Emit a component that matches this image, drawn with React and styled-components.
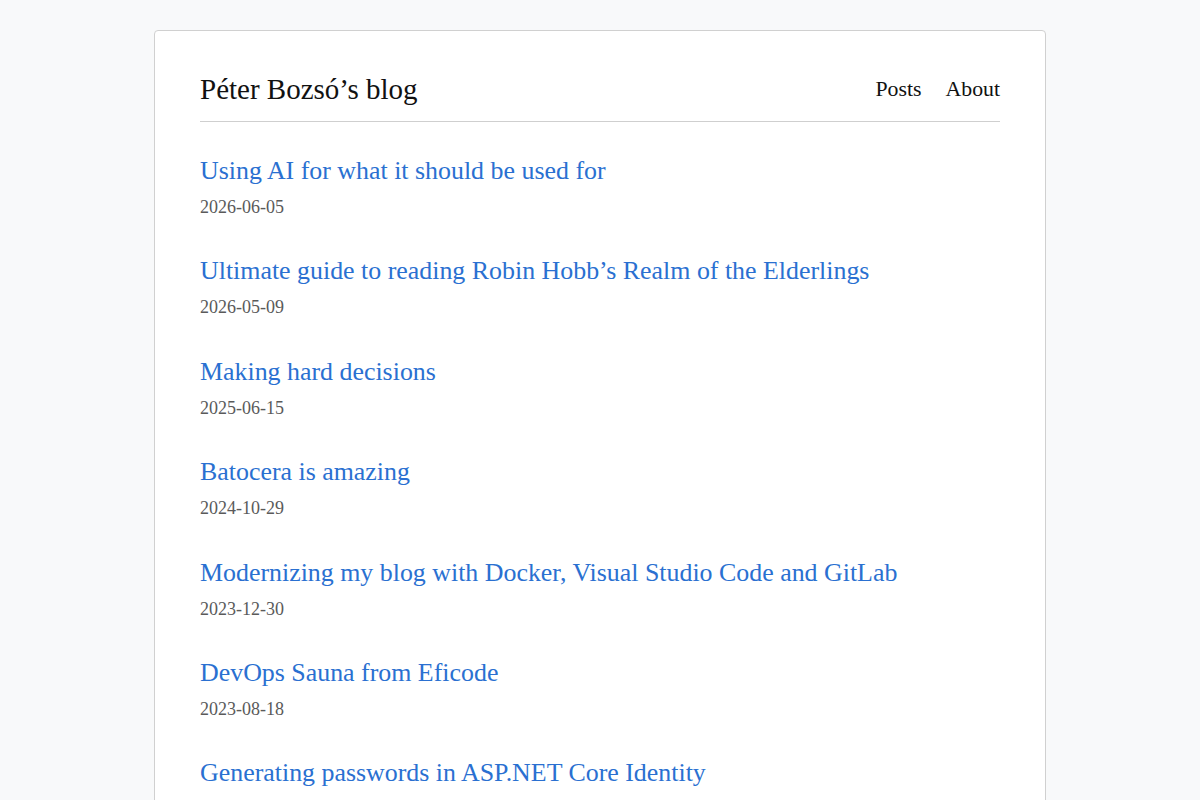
import React from "react";
import styled, { createGlobalStyle } from "styled-components";

const GlobalStyle = createGlobalStyle`
  html, body {
    margin: 0;
    padding: 0;
    background: #f8f9fa;
    font-family: "Liberation Serif", "DejaVu Serif", serif;
    color: #111;
  }
`;

const Card = styled.div`
  width: 892px;
  margin: 30px auto 0;
  background: #fff;
  border: 1px solid #d0d0d0;
  border-radius: 4px;
  padding: 0 45px 40px;
  box-sizing: border-box;
  min-height: 800px;
`;

const Header = styled.header`
  display: flex;
  align-items: center;
  justify-content: space-between;
  height: 90px;
  border-bottom: 1px solid #cfcfcf;
`;

const SiteTitle = styled.a`
  font-size: 29px;
  color: #111;
  text-decoration: none;
  margin-top: 26px;
`;

const Nav = styled.nav`
  display: flex;
  gap: 24px;
  margin-top: 26px;
`;

const NavLink = styled.a`
  font-size: 21.8px;
  color: #111;
  text-decoration: none;
`;

const PostList = styled.ul`
  list-style: none;
  margin: 0;
  padding: 30px 0 0;
`;

const PostItem = styled.li`
  height: 100.4px;
`;

const PostTitle = styled.a`
  display: block;
  font-size: 25.9px;
  line-height: 38px;
  color: #2a70d1;
  text-decoration: none;
`;

const PostDate = styled.div`
  margin-top: 4px;
  font-size: 18px;
  line-height: 26px;
  color: #5a5a5a;
`;

const posts = [
  { title: "Using AI for what it should be used for", date: "2026-06-05" },
  { title: "Ultimate guide to reading Robin Hobb\u2019s Realm of the Elderlings", date: "2026-05-09" },
  { title: "Making hard decisions", date: "2025-06-15" },
  { title: "Batocera is amazing", date: "2024-10-29" },
  { title: "Modernizing my blog with Docker, Visual Studio Code and GitLab", date: "2023-12-30" },
  { title: "DevOps Sauna from Eficode", date: "2023-08-18" },
  { title: "Generating passwords in ASP.NET Core Identity", date: "2023-05-02" },
];

const App = () => {
  return (
    <>
      <GlobalStyle />
      <Card>
        <Header>
          <SiteTitle href="#">Péter Bozsó’s blog</SiteTitle>
          <Nav>
            <NavLink href="#">Posts</NavLink>
            <NavLink href="#">About</NavLink>
          </Nav>
        </Header>
        <PostList>
          {posts.map((post) => (
            <PostItem key={post.date}>
              <PostTitle href="#">{post.title}</PostTitle>
              <PostDate>{post.date}</PostDate>
            </PostItem>
          ))}
        </PostList>
      </Card>
    </>
  );
};

export default App;
